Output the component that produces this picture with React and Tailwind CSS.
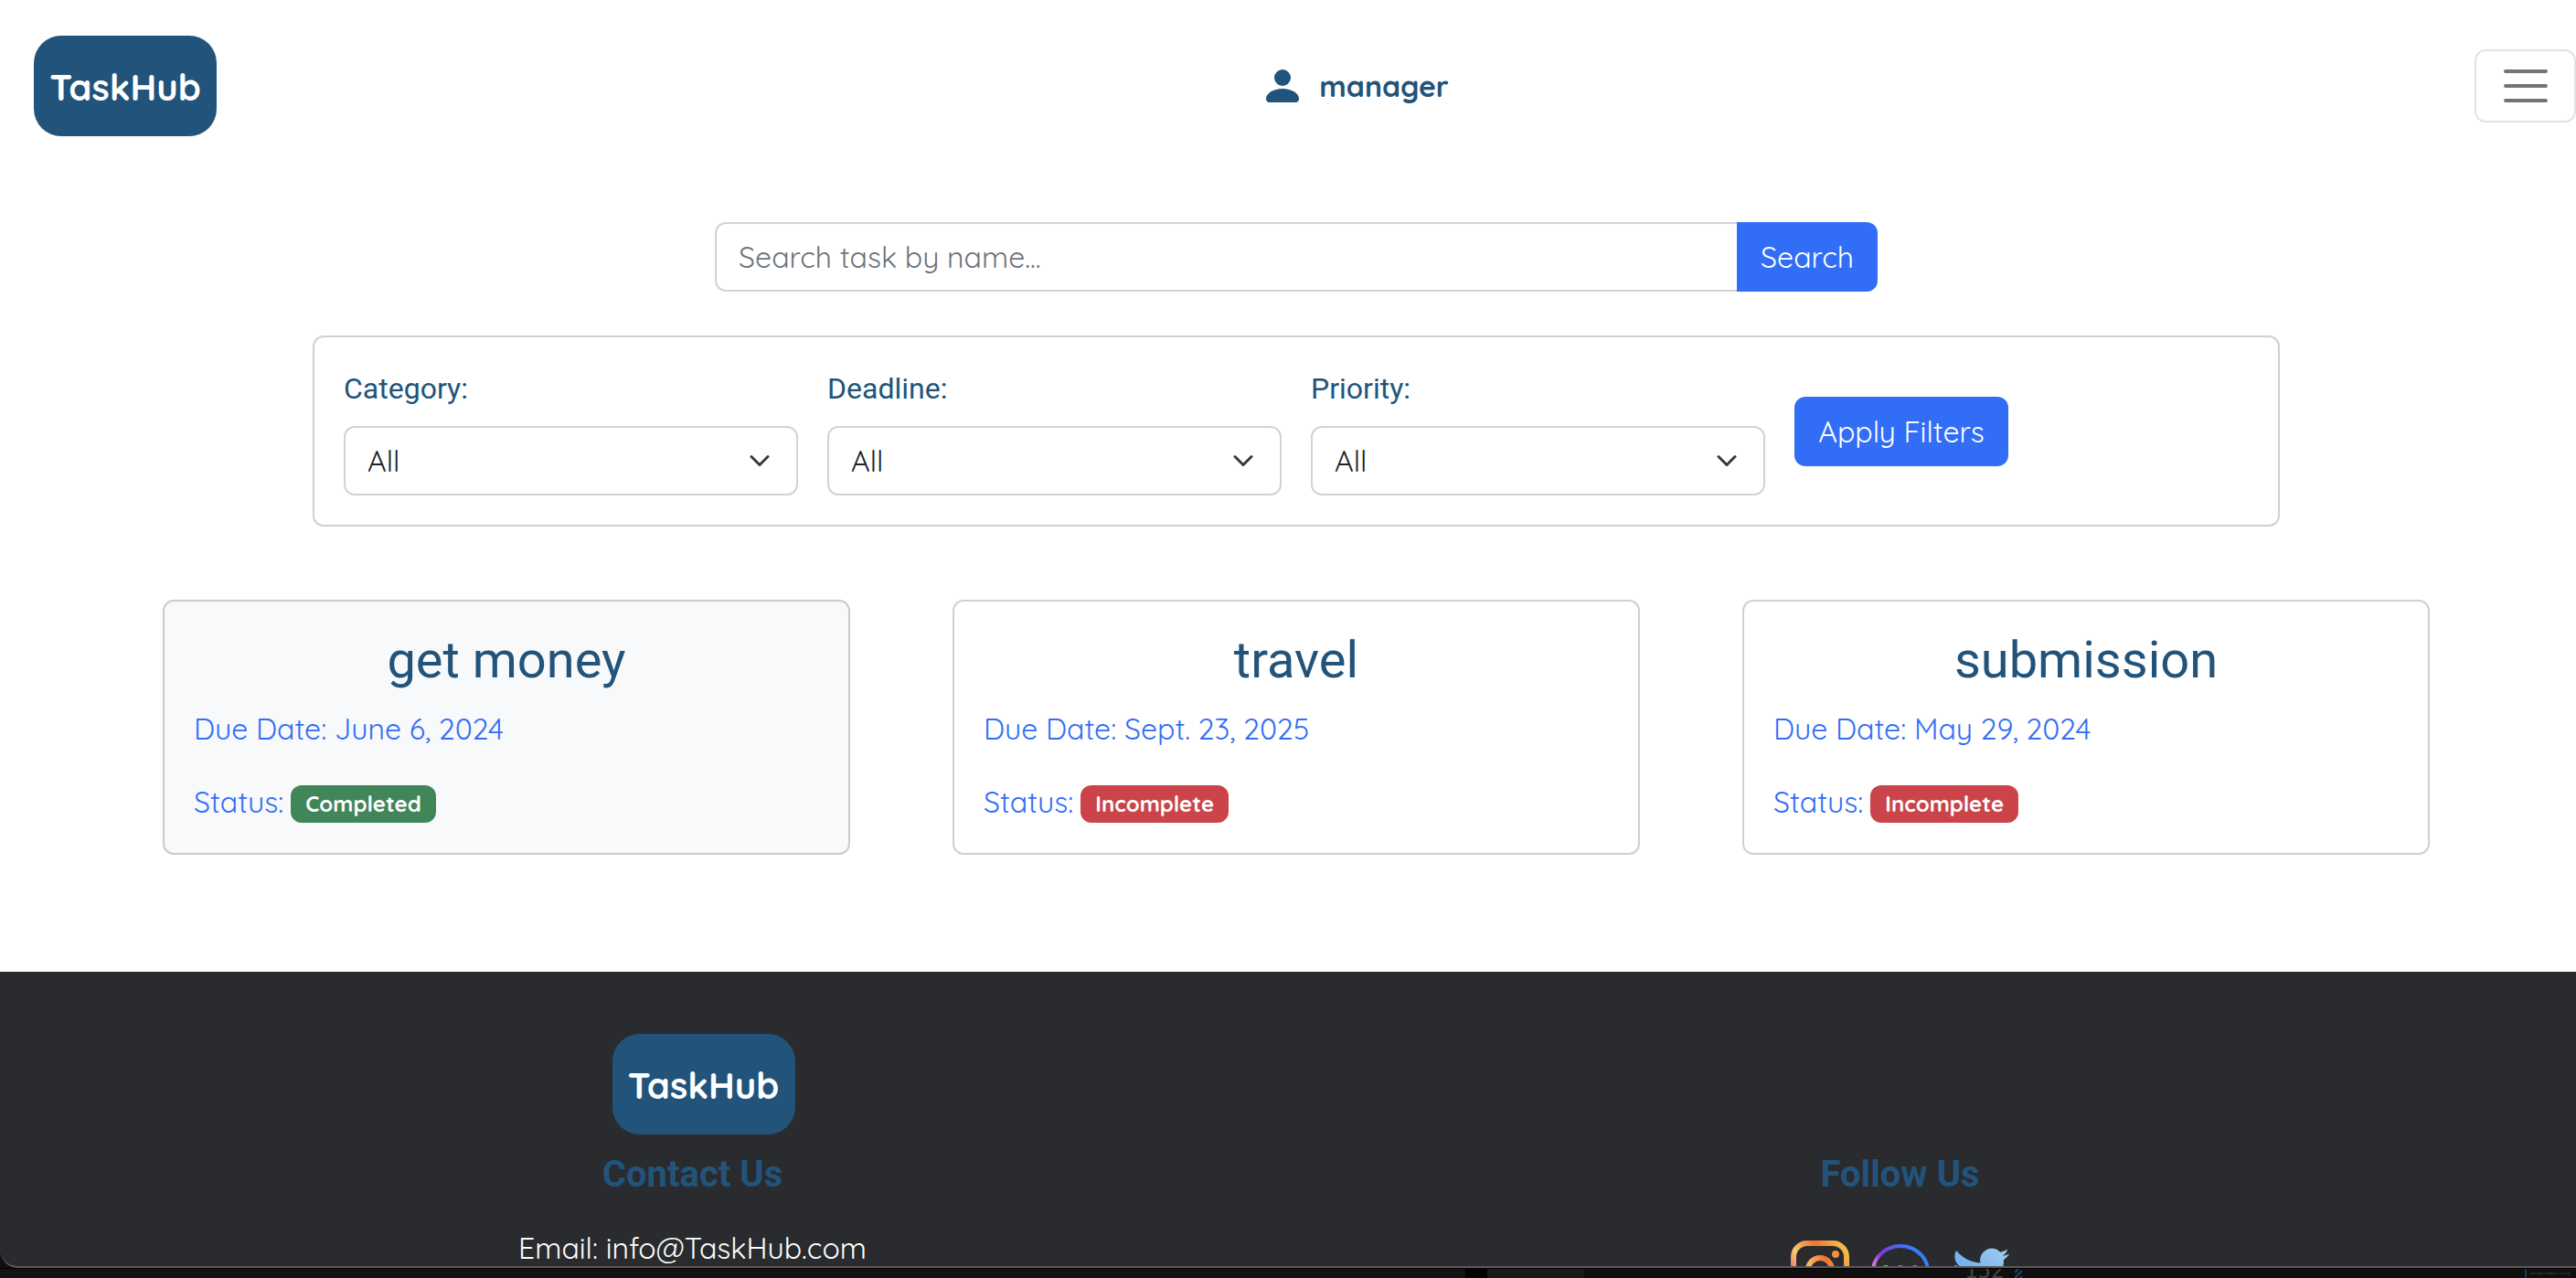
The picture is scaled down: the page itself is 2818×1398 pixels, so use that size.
function Logo() {
  return (
    <a href="#home" className="flex h-[110px] w-[200px] items-center justify-center rounded-[30px] bg-[#22547b] pt-0.5 text-[40px] font-bold text-white">
      TaskHub
    </a>
  );
}

const filters = ["Category", "Deadline", "Priority"];

const tasks = [
  { title: "get money", due: "June 6, 2024", done: true },
  { title: "travel", due: "Sept. 23, 2025", done: false },
  { title: "submission", due: "May 29, 2024", done: false },
];

function Filter({ name }) {
  const id = name.toLowerCase();
  return (
    <div>
      <label htmlFor={id} className="mb-4 block font-['Roboto'] text-[32px] leading-[49px] text-[#22547b]">
        {name}:
      </label>
      <div className="relative">
        <select id={id} className="h-[76px] w-full appearance-none rounded-xl border-2 border-[#ced4da] bg-white px-6 text-[#212529]">
          <option>All</option>
        </select>
        <svg viewBox="0 0 16 16" className="pointer-events-none absolute top-[26px] right-[30px] size-6" fill="none" stroke="#343a40" strokeWidth="2" strokeLinecap="round" strokeLinejoin="round">
          <path d="m2 5 6 6 6-6" />
        </svg>
      </div>
    </div>
  );
}

function TaskCard({ task }) {
  return (
    <article className={`rounded-xl border-2 p-8 ${task.done ? "border-[#c9cbcd] bg-[#f8f9fb]" : "border-[#d0d0d1] bg-white"}`}>
      <h2 className="mb-[18px] text-center font-['Roboto'] text-[56px] leading-[65px] text-[#22547b]">{task.title}</h2>
      <p className="mb-8 text-[#326df6]">Due Date: {task.due}</p>
      <p className="flex items-center gap-2 text-[#326df6]">
        Status:
        <span className={`mt-1 rounded-xl px-4 text-[24px] leading-[41px] font-bold text-white ${task.done ? "bg-[#418658]" : "bg-[#ca444a]"}`}>
          {task.done ? "Completed" : "Incomplete"}
        </span>
      </p>
    </article>
  );
}

function Socials() {
  return (
    <div className="flex items-start gap-6">
      <a href="#instagram" aria-label="Instagram">
        <svg width="64" height="64" viewBox="0 0 64 64" fill="none">
          <defs>
            <linearGradient id="ig" x1="0" y1="40" x2="64" y2="0" gradientUnits="userSpaceOnUse">
              <stop offset="0" stopColor="#e0506a" />
              <stop offset=".25" stopColor="#f8cc72" />
              <stop offset=".55" stopColor="#ef7430" />
              <stop offset=".9" stopColor="#f8bd4c" />
            </linearGradient>
            <linearGradient id="lens" x1="16" y1="32" x2="48" y2="26" gradientUnits="userSpaceOnUse">
              <stop offset="0" stopColor="#f8cc72" />
              <stop offset=".7" stopColor="#ef7430" />
              <stop offset="1" stopColor="#f08a3c" />
            </linearGradient>
          </defs>
          <rect x="3" y="3" width="58" height="58" rx="15" stroke="url(#ig)" strokeWidth="6" />
          <circle cx="32" cy="32" r="13" stroke="url(#lens)" strokeWidth="6" />
          <circle cx="49" cy="15" r="4" fill="#f58f3c" />
        </svg>
      </a>
      <a href="#messenger" aria-label="Messenger" className="mt-1">
        <svg width="64" height="60" viewBox="0 0 64 60" fill="none">
          <defs>
            <linearGradient id="ms" x1="0" y1="30" x2="42" y2="0" gradientUnits="userSpaceOnUse">
              <stop offset="0" stopColor="#f0a0d8" />
              <stop offset=".4" stopColor="#7c36dc" />
              <stop offset="1" stopColor="#347ffc" />
            </linearGradient>
          </defs>
          <ellipse cx="32" cy="30" rx="30" ry="28" stroke="url(#ms)" strokeWidth="4" />
          <circle cx="16" cy="27" r="4" fill="#cf8de8" />
          <circle cx="32" cy="27" r="4" fill="#9c5bea" />
          <circle cx="48" cy="27" r="4" fill="#7a78fa" />
        </svg>
      </a>
      <a href="#twitter" aria-label="Twitter" className="mt-2">
        <svg width="64" height="52" viewBox="0 0 24 20">
          <defs>
            <linearGradient id="tw" x1="0" y1="1" x2="1" y2="0">
              <stop offset="0" stopColor="#4f9ff0" />
              <stop offset="1" stopColor="#a4cdf2" />
            </linearGradient>
          </defs>
          <path fill="url(#tw)" d="M23.95 2.57a10 10 0 0 1-2.82.78 4.96 4.96 0 0 0 2.16-2.73 9.9 9.9 0 0 1-3.12 1.19 4.92 4.92 0 0 0-8.39 4.49C7.69 6.1 4.07 4.14 1.64 1.16a4.92 4.92 0 0 0 1.52 6.57 4.9 4.9 0 0 1-2.23-.61v.06a4.92 4.92 0 0 0 3.95 4.83 5 5 0 0 1-2.21.08 4.94 4.94 0 0 0 4.6 3.42A9.87 9.87 0 0 1 0 17.54a13.99 13.99 0 0 0 7.56 2.21c9.05 0 14-7.5 14-13.98 0-.21 0-.42-.02-.63a9.94 9.94 0 0 0 2.46-2.55z" />
        </svg>
      </a>
    </div>
  );
}

// Sliver of the editor window that shows below the browser window.
function EditorStrip() {
  return (
    <div className="flex h-[11px] shrink-0 items-end overflow-hidden border-t border-black bg-[#0f0f0f]">
      <div className="h-full flex-1 bg-[#131315]" />
      <div className="h-full w-6 bg-black" />
      <div className="h-full w-[106px] bg-[#1a1a1a]" />
      <div className="flex h-full w-[1085px] items-end">
        <span className="ml-[416px] font-['DejaVu_Sans_Mono',monospace] text-[24px] leading-4 text-[#444444]">152</span>
        <svg width="8" height="10" viewBox="0 0 8 10" className="ml-3" stroke="#1d4a66" strokeWidth="2">
          <path d="M0 4 4 0M0 10 8 2M5 11 8 8" />
        </svg>
        <div className="ml-auto flex h-full w-14 items-center border-l-2 border-[#1d3a52] pl-1 font-['DejaVu_Sans_Mono',monospace] text-[3px] leading-none whitespace-nowrap text-[#5c5c5c]">
          and Requirements<span className="text-[#2c5a86]">&lt;/strong&gt;</span>
        </div>
      </div>
    </div>
  );
}

export default function App() {
  return (
    <div className='flex h-screen flex-col overflow-hidden bg-white font-["Quicksand","Lato",sans-serif] text-[32px] leading-[48px]'>
      <header className="flex h-[188px] shrink-0 items-center justify-between pl-[37px]">
        <Logo />
        <a href="#profile" className="flex items-center gap-[22px] pl-[26px] font-bold text-[#22547b]">
          <svg width="36" height="36" viewBox="0 0 36 36" fill="#22547b">
            <circle cx="18" cy="9" r="9" />
            <path d="M0 32c0-6 8-11 18-11s18 5 18 11c0 2-1 4-4 4H4c-3 0-4-2-4-4z" />
          </svg>
          manager
        </a>
        <button aria-label="Toggle navigation" className="flex h-20 w-[111px] items-center justify-center rounded-xl border-2 border-[#e3e3e3]">
          <svg width="48" height="36" viewBox="0 0 48 36" stroke="#747474" strokeWidth="4" strokeLinecap="round">
            <path d="M2 2h44M2 18h44M2 34h44" />
          </svg>
        </button>
      </header>

      <main className="flex shrink-0 flex-col items-center pt-[55px] pb-32 pl-[18px]">
        <form className="flex w-[1272px] max-w-full">
          <input aria-label="Search task by name" placeholder="Search task by name..." className="h-[76px] min-w-0 flex-1 rounded-l-xl border-2 border-r-0 border-[#ced4da] px-6 placeholder:text-[#6c757d]" />
          <button type="button" className="h-[76px] w-[154px] rounded-r-xl bg-[#326df6] text-white">Search</button>
        </form>

        <form className="mt-12 grid w-[2152px] max-w-full grid-cols-4 items-center gap-8 rounded-xl border-2 border-[#d0d0d1] p-8">
          {filters.map((name) => (
            <Filter key={name} name={name} />
          ))}
          <button type="button" className="h-[76px] w-[234px] rounded-xl bg-[#326df6] text-white">Apply Filters</button>
        </form>

        <section className="mt-20 grid w-[2480px] max-w-full grid-cols-3 gap-28">
          {tasks.map((task) => (
            <TaskCard key={task.title} task={task} />
          ))}
        </section>
      </main>

      <div className="flex min-h-0 flex-1 flex-col bg-[#101012]">
        <footer className="min-h-0 flex-1 overflow-hidden rounded-bl-[20px] border-b-2 border-[#5a5a5c] bg-[#2a2b2e] pt-[68px] pl-[18px]">
          <div className="mx-auto grid w-[2642px] max-w-full grid-cols-2 items-end">
            <div className="flex flex-col items-center">
              <div className="pl-6">
                <Logo />
              </div>
              <h3 className="mt-5 font-['Roboto'] text-[40px] leading-[48px] font-bold text-[#22547b]">Contact Us</h3>
            </div>
            <h3 className="text-center font-['Roboto'] text-[40px] leading-[48px] font-bold text-[#22547b]">Follow Us</h3>
            <p className="mt-8 self-start text-center text-white">Email: info@TaskHub.com</p>
            <div className="mt-12 flex justify-center self-start">
              <Socials />
            </div>
          </div>
        </footer>
        <EditorStrip />
      </div>
    </div>
  );
}
